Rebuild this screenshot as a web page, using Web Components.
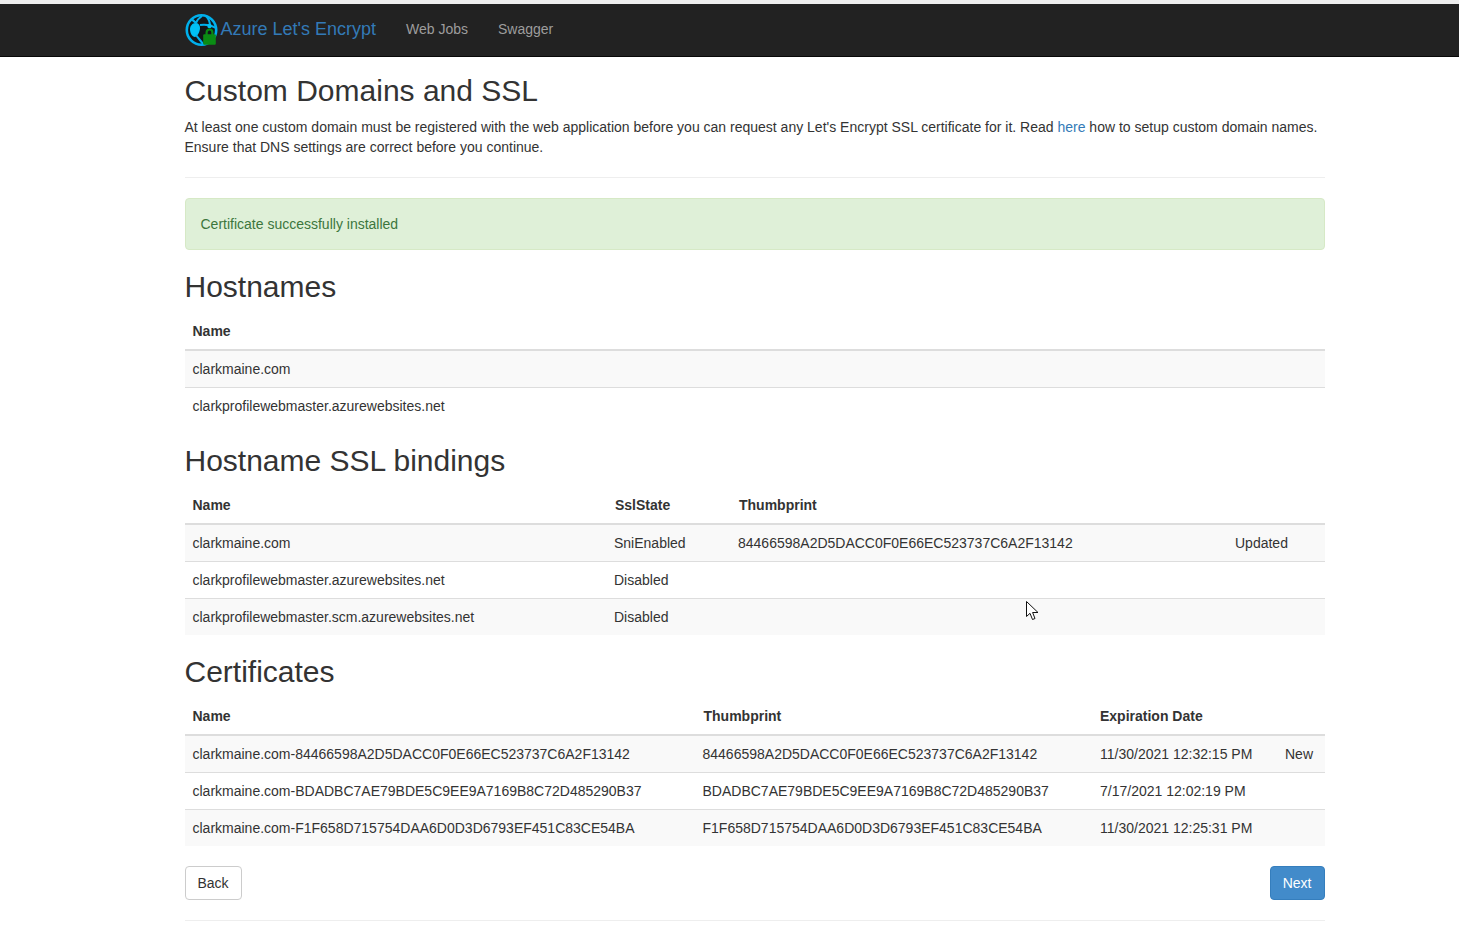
<!DOCTYPE html>
<html>
<head>
<meta charset="utf-8">
<title>Azure Let's Encrypt</title>
<style>
  html, body { margin: 0; padding: 0; background: #fff; overflow: hidden; height: 100%; }
  body {
    font-family: "Liberation Sans", Arial, sans-serif;
    font-size: 14px;
    line-height: 20px;
    color: #333;
  }
</style>
</head>
<body>
<app-navbar></app-navbar>
<page-body>
  <page-heading>Custom Domains and SSL</page-heading>
  <p-text>At least one custom domain must be registered with the web application before you can request any Let's Encrypt SSL certificate for it. Read <a href="#" style="color:#337ab7;text-decoration:none">here</a> how to setup custom domain names.<br>Ensure that DNS settings are correct before you continue.</p-text>
  <page-rule></page-rule>
  <alert-box>Certificate successfully installed</alert-box>

  <page-heading>Hostnames</page-heading>
  <data-table id="hostnames"></data-table>

  <page-heading>Hostname SSL bindings</page-heading>
  <data-table id="bindings"></data-table>

  <page-heading>Certificates</page-heading>
  <data-table id="certs"></data-table>

  <button-row>
    <app-button>Back</app-button>
    <app-button kind="primary">Next</app-button>
  </button-row>
  <page-rule></page-rule>
</page-body>
<mouse-cursor></mouse-cursor>

<script>
class AppNavbar extends HTMLElement {
  constructor() {
    super();
    this.attachShadow({mode: "open"}).innerHTML = `
      <style>
        :host { display: block; background: #eee; padding-top: 4px; }
        nav { background: #222; border-bottom: 1px solid #080808; height: 53px; box-sizing: border-box; padding: 0 0 2px 184.5px; display: flex; align-items: center; }
        .brand { display: flex; align-items: center; color: #337ab7; font-size: 18px; text-decoration: none; width: 221.500px; }
        .brand svg { display: block; margin: 2px 3px 0 0; }
        a.link { color: #9d9d9d; text-decoration: none; margin-right: 30px; }
      </style>
      <nav>
        <a class="brand" href="#">
          <svg width="33" height="34" viewBox="0 0 33 34">
            <circle cx="16.500" cy="17" r="14.700" fill="#12161a" stroke="#00b0ec" stroke-width="2.600"/>
            <path d="M5 16c0-3 2.500-6 5.500-6 3 0 4.500 2 4.500 5s-2 8-5 9c-3 0-5-4-5-8z" fill="#00c0f5"/>
            <path d="M11 10c1-3 3-5 6-7M15 12c6-1 11 0 16 3M11 22c2 3 5 6 7 9M21 3c3 3 4 6 4 10M6 6c2 1 3 2 5 4" fill="none" stroke="#00b0ec" stroke-width="2"/>
            <circle cx="24.500" cy="13" r="2.200" fill="#00c0f5"/>
            <path d="M21.600 22v-2.600a2.900 2.900 0 0 1 5.800 0V22" fill="none" stroke="#0a8c14" stroke-width="2.200"/>
            <rect x="18.200" y="21.300" width="12.600" height="10.400" rx="1" fill="#0a8c14"/>
          </svg>
          <span>Azure Let's Encrypt</span>
        </a>
        <a class="link" href="#">Web Jobs</a>
        <a class="link" href="#">Swagger</a>
      </nav>`;
  }
}

class PageBody extends HTMLElement {
  constructor() {
    super();
    this.attachShadow({mode: "open"}).innerHTML = `
      <style>
        :host { display: block; width: 1140px; margin-left: 184.5px; padding-top: 17px; }
      </style>
      <slot></slot>`;
  }
}

class PageHeading extends HTMLElement {
  constructor() {
    super();
    this.attachShadow({mode: "open"}).innerHTML = `
      <style>
        :host { display: block; font-size: 30px; line-height: 33px; font-weight: 500; margin-bottom: 10px; }
      </style>
      <slot></slot>`;
  }
}

class PText extends HTMLElement {
  constructor() {
    super();
    this.attachShadow({mode: "open"}).innerHTML = `
      <style>:host { display: block; }</style><slot></slot>`;
  }
}

class PageRule extends HTMLElement {
  constructor() {
    super();
    this.attachShadow({mode: "open"}).innerHTML = `
      <style>:host { display: block; height: 1px; background: #eee; margin: 20px 0; }</style>`;
  }
}

class AlertBox extends HTMLElement {
  constructor() {
    super();
    this.attachShadow({mode: "open"}).innerHTML = `
      <style>
        :host { display: block; padding: 15px; background: #dff0d8; border: 1px solid #d6e9c6; border-radius: 4px; color: #3c763d; margin-bottom: 20px; }
      </style>
      <slot></slot>`;
  }
}

class DataTable extends HTMLElement {
  constructor() {
    super();
    this.attachShadow({mode: "open"});
  }
  set data(d) {
    let cols = (d.widths || []).map(w => `<col style="width:${w}px">`).join("");
    // nudge: header cells that sit 1px right of their column in the reference
    let head = d.head.map((h, i) => `<th class="${(d.nudge || []).includes(i) ? "nudge" : ""}">${h}</th>`).join("");
    let rows = d.rows.map(r => `<tr>${r.map(c => `<td>${c}</td>`).join("")}</tr>`).join("");
    this.shadowRoot.innerHTML = `
      <style>
        :host { display: block; margin-bottom: 20px; }
        table { width: 100%; border-collapse: collapse; border-spacing: 0; table-layout: fixed; }
        th, td { padding: 8px; text-align: left; line-height: 20px; white-space: nowrap; }
        th { font-weight: bold; border-bottom: 2px solid #ddd; }
        th.nudge { padding-left: 9px; }
        td { border-top: 1px solid #ddd; }
        tr:first-child td { border-top: 0; }
        tbody tr:nth-of-type(odd) { background: #f9f9f9; }
      </style>
      <table><colgroup>${cols}</colgroup><thead><tr>${head}</tr></thead><tbody>${rows}</tbody></table>`;
  }
}

class ButtonRow extends HTMLElement {
  constructor() {
    super();
    this.attachShadow({mode: "open"}).innerHTML = `
      <style>:host { display: flex; justify-content: space-between; }</style><slot></slot>`;
  }
}

class AppButton extends HTMLElement {
  constructor() {
    super();
    this.attachShadow({mode: "open"}).innerHTML = `
      <style>
        :host { display: block; padding: 6px 12px; border: 1px solid #ccc; border-radius: 4px; background: #fff; color: #333; cursor: pointer; }
        :host([kind="primary"]) { background: #428bca; border-color: #357ebd; color: #fff; }
      </style>
      <slot></slot>`;
  }
}

class MouseCursor extends HTMLElement {
  constructor() {
    super();
    this.attachShadow({mode: "open"}).innerHTML = `
      <style>:host { position: absolute; left: 1026px; top: 601px; display: block; width: 14px; height: 20px; }</style>
      <svg width="14" height="20" viewBox="0 0 14 20">
        <path d="M.5.5V15.500L4 12.300 6.500 18.500 9 17.500 6.600 11.500H12z" fill="#fff" stroke="#111" stroke-width="1"/>
      </svg>`;
  }
}

customElements.define("app-navbar", AppNavbar);
customElements.define("page-body", PageBody);
customElements.define("page-heading", PageHeading);
customElements.define("p-text", PText);
customElements.define("page-rule", PageRule);
customElements.define("alert-box", AlertBox);
customElements.define("data-table", DataTable);
customElements.define("button-row", ButtonRow);
customElements.define("app-button", AppButton);
customElements.define("mouse-cursor", MouseCursor);

document.getElementById("hostnames").data = {
  head: ["Name"],
  rows: [["clarkmaine.com"], ["clarkprofilewebmaster.azurewebsites.net"]]
};
document.getElementById("bindings").data = {
  widths: [421.5, 124, 497, 97.5],
  nudge: [1, 2],
  head: ["Name", "SslState", "Thumbprint", ""],
  rows: [
    ["clarkmaine.com", "SniEnabled", "84466598A2D5DACC0F0E66EC523737C6A2F13142", "Updated"],
    ["clarkprofilewebmaster.azurewebsites.net", "Disabled", "", ""],
    ["clarkprofilewebmaster.scm.azurewebsites.net", "Disabled", "", ""]
  ]
};
document.getElementById("certs").data = {
  widths: [510, 397.5, 185, 47.5],
  nudge: [1],
  head: ["Name", "Thumbprint", "Expiration Date", ""],
  rows: [
    ["clarkmaine.com-84466598A2D5DACC0F0E66EC523737C6A2F13142", "84466598A2D5DACC0F0E66EC523737C6A2F13142", "11/30/2021 12:32:15 PM", "New"],
    ["clarkmaine.com-BDADBC7AE79BDE5C9EE9A7169B8C72D485290B37", "BDADBC7AE79BDE5C9EE9A7169B8C72D485290B37", "7/17/2021 12:02:19 PM", ""],
    ["clarkmaine.com-F1F658D715754DAA6D0D3D6793EF451C83CE54BA", "F1F658D715754DAA6D0D3D6793EF451C83CE54BA", "11/30/2021 12:25:31 PM", ""]
  ]
};
</script>
</body>
</html>
